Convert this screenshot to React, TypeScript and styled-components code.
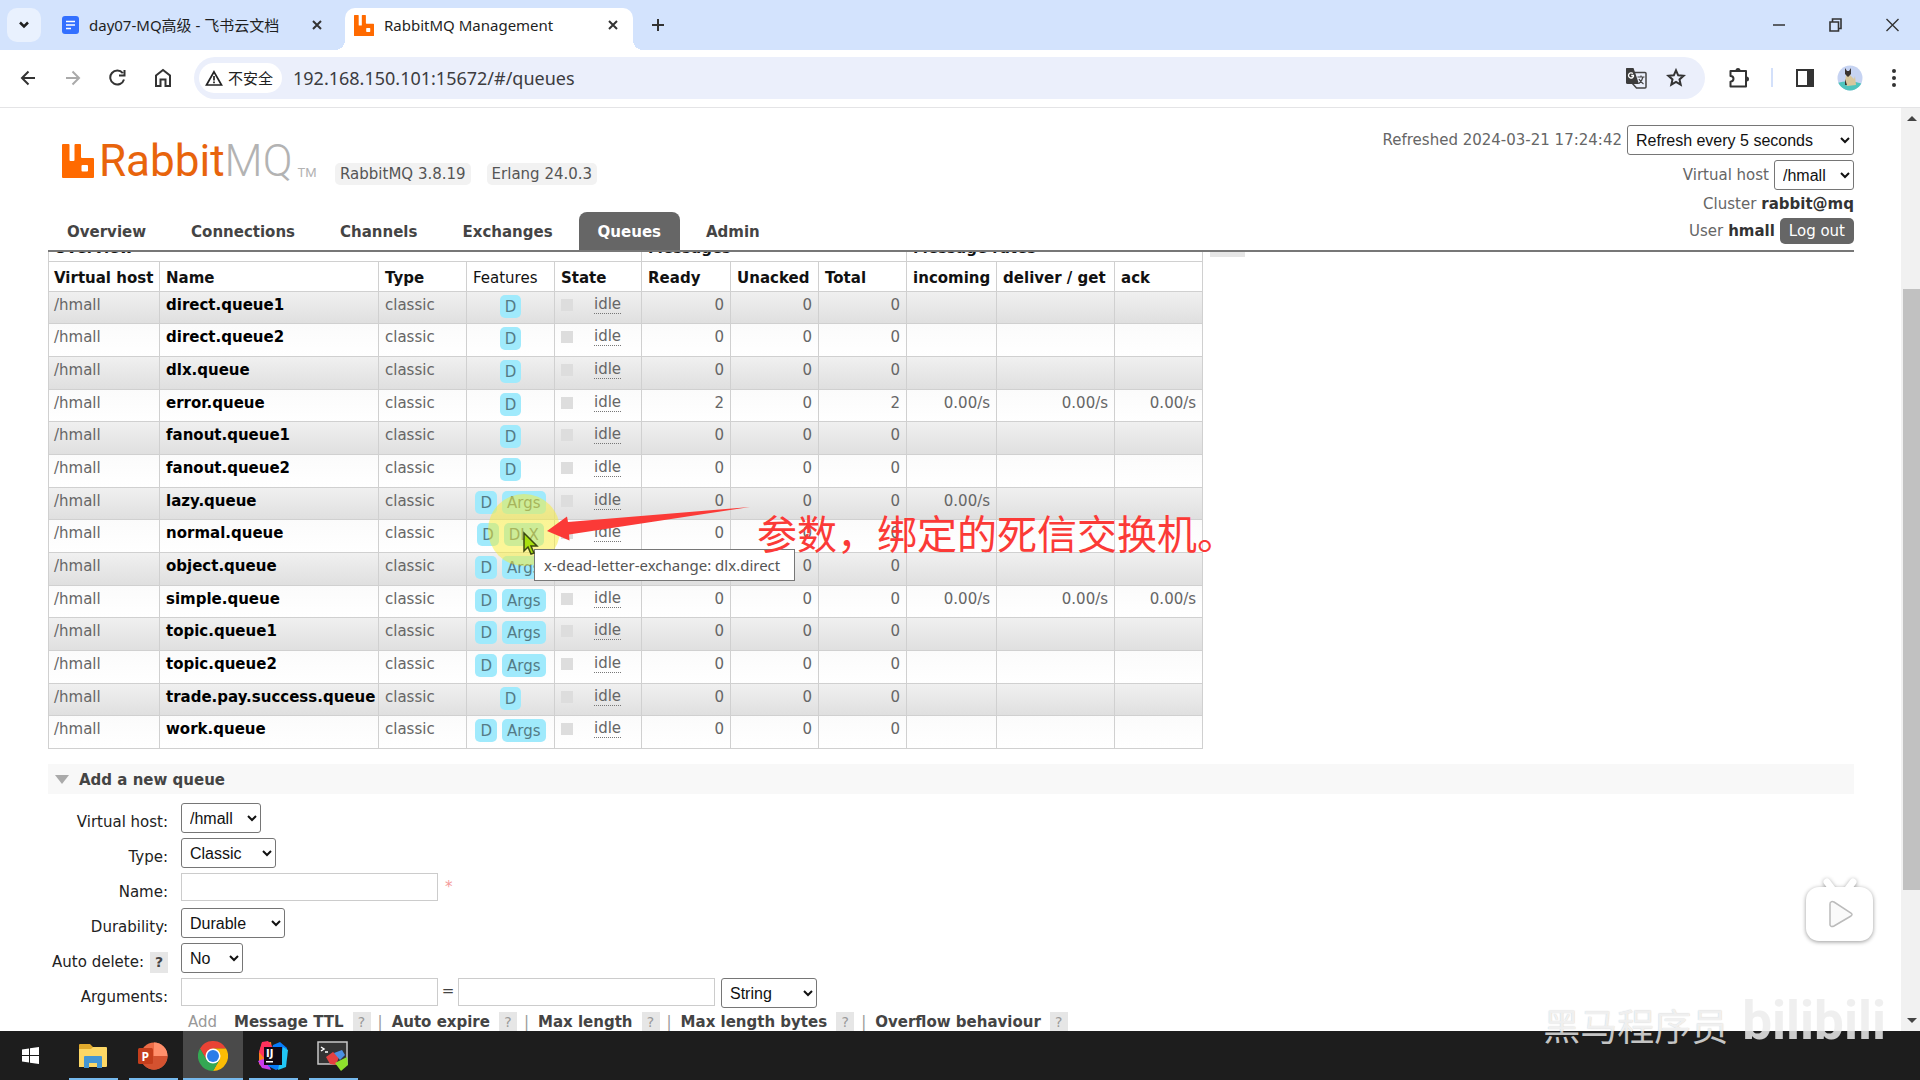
import React from "react";
import styled, { createGlobalStyle } from "styled-components";

const pageFont = `"DejaVu Sans", Verdana, "Noto Sans CJK SC", sans-serif`;
const uiFont = `"Noto Sans", "Noto Sans CJK SC", sans-serif`;
const selectFont = `"Liberation Sans", Arial, sans-serif`;

const GlobalStyle = createGlobalStyle`
  * { box-sizing: border-box; }
  body { margin: 0; background: #fff; font-family: ${pageFont}; font-size: 15px; line-height: 18px; color: #444; }
  button, input { font: inherit; color: inherit; }
  button { border: 0; padding: 0; background: none; cursor: pointer; }
  a { color: inherit; text-decoration: none; }
`;

const Screen = styled.div`
  position: relative;
  height: 100vh;
  display: flex;
  flex-direction: column;
  overflow: hidden;
`;

/* ---------- browser chrome ---------- */

const TabStrip = styled.div`
  flex: none;
  height: 50px;
  display: flex;
  align-items: stretch;
  padding: 8px 0 0 7px;
  background: #d3e3fd;
  font-family: ${uiFont};
  font-size: 15px;
  color: #1f1f1f;
`;

const TabSearch = styled.button`
  width: 34px;
  height: 34px;
  margin-right: 12px;
  border-radius: 10px;
  background: #e9f1fe;
  display: grid;
  place-items: center;
`;

const Tab = styled.div<{ $active?: boolean }>`
  position: relative;
  width: ${(p) => (p.$active ? 288 : 292)}px;
  display: flex;
  align-items: center;
  gap: 10px;
  padding: 0 ${(p) => (p.$active ? 14 : 22)}px 8px 9px;
  border-radius: 10px 10px 0 0;
  background: ${(p) => (p.$active ? "#fff" : "transparent")};
  span { flex: 1; white-space: nowrap; }
  &::before, &::after {
    content: "";
    display: ${(p) => (p.$active ? "block" : "none")};
    position: absolute;
    bottom: 0;
    width: 10px;
    height: 10px;
  }
  &::before { left: -10px; background: radial-gradient(circle at 0 0, transparent 10px, #fff 10px); }
  &::after { right: -10px; background: radial-gradient(circle at 100% 0, transparent 10px, #fff 10px); }
`;

const IconButton = styled.button<{ $w?: number }>`
  width: ${(p) => p.$w ?? 44}px;
  flex: none;
  display: grid;
  place-items: center;
  color: #333;
  &:disabled { color: #aaa; }
`;

const StripButton = styled(IconButton)`padding-bottom: 8px;`;
const Spring = styled.div`flex: 1;`;

const Toolbar = styled.div`
  flex: none;
  height: 58px;
  display: flex;
  align-items: center;
  padding: 0 4px 2px 5px;
  border-bottom: 1px solid #e4e4e6;
  background: #fff;
  font-family: ${uiFont};
`;

const AddressBar = styled.div`
  flex: 1;
  height: 42px;
  margin: 0 12px 0 9px;
  padding: 0 9px 0 5px;
  display: flex;
  align-items: center;
  border-radius: 21px;
  background: #ebeffb;
`;

const SafetyChip = styled.button`
  height: 30px;
  padding: 0 9px 0 6px;
  display: flex;
  align-items: center;
  gap: 5px;
  border-radius: 15px;
  background: #fff;
  font-size: 15px;
  color: #222;
`;

const Url = styled.input`
  flex: 1;
  min-width: 0;
  margin-left: 11px;
  padding: 0;
  border: 0;
  outline: 0;
  background: transparent;
  font-size: 18px;
  color: #3c3c40;
`;

const Divider = styled.i`width: 2px; height: 19px; margin: 0 10px; background: #d3e0fa;`;

/* ---------- page ---------- */

const Viewport = styled.div`flex: 1; min-height: 0; display: flex;`;
const Page = styled.div`flex: 1; min-width: 0; display: flex; flex-direction: column; background: #fff;`;

const Header = styled.header`
  flex: none;
  height: 144px;
  margin: 0 47px 0 48px;
  display: flex;
  justify-content: space-between;
  border-bottom: 2px solid #777;
`;

const HeaderLeft = styled.div`display: flex; flex-direction: column; justify-content: space-between; padding-top: 33px;`;
const LogoRow = styled.div`display: flex; align-items: flex-end; gap: 16px; padding-left: 14px;`;
const Logo = styled.a`
  display: flex;
  align-items: flex-end;
  width: 257px;
  height: 40px;
  font-family: Roboto, sans-serif;
  font-size: 44px;
  line-height: 40px;
  color: #e8640c;
  svg { margin: 0 5px 3px 0; flex: none; }
  b { font-weight: 300; color: #b3b3b3; }
  small { margin-left: 5px; font-size: 13px; line-height: 16px; color: #b3b3b3; }
`;
const Version = styled.span`
  padding: 2px 5px;
  margin-bottom: -4px;
  border-radius: 5px;
  background: #f2f2f2;
  color: #555;
`;

const Nav = styled.nav`display: flex; gap: 7px;`;
const NavLink = styled.a<{ $active?: boolean }>`
  height: 38px;
  padding: 11px 19px 0;
  border-radius: 8px 8px 0 0;
  font-weight: bold;
  color: ${(p) => (p.$active ? "#fff" : "#444")};
  background: ${(p) => (p.$active ? "#666" : "transparent")};
`;

const Status = styled.div`
  display: flex;
  flex-direction: column;
  align-items: flex-end;
  gap: 5px;
  padding-top: 17px;
  color: #666;
  b { color: #333; }
`;
const StatusLine = styled.div`display: flex; align-items: center; gap: 5px; white-space: nowrap;`;

const Select = styled.select<{ $w: number }>`
  width: ${(p) => p.$w}px;
  height: 30px;
  padding: 0 4px;
  border: 1px solid #767676;
  border-radius: 3px;
  background: #fff;
  font-family: ${selectFont};
  font-size: 16px;
  color: #111;
`;

const LogOut = styled.button`
  height: 26px;
  padding: 0 9px;
  border-radius: 5px;
  background: #666;
  color: #fff;
`;

const Content = styled.main`flex: 1; min-height: 0; overflow: hidden; padding: 0 47px 0 48px;`;
const TableRow = styled.div`display: flex; align-items: flex-start; gap: 7px; margin-top: -21px;`;

const QueueTable = styled.table`
  width: 1155px;
  table-layout: fixed;
  border-collapse: collapse;
  th, td { border: 1px solid #d0d0d0; padding: 0 6px; white-space: nowrap; }
  th { height: 30px; padding-top: 2px; text-align: left; color: #111; background: #fff; }
  td { height: 33px; padding-top: 4px; vertical-align: top; color: #666; }
  th:first-child, td:first-child { padding: 0 5px; }
  td:first-child { padding-top: 4px; }
  th:first-child { padding-top: 2px; }
  tbody tr:nth-child(3n + 1) td { height: 32px; }
  tbody tr:nth-child(odd) { background: linear-gradient(#f0f0f0, #dfdfdf); }
  tbody tr:nth-child(even) { background: linear-gradient(#fbfbfb, #fff); }
`;

const NameCell = styled.td`a { font-weight: bold; color: #000; }`;
const NumCell = styled.td`text-align: right;`;
const PlainTh = styled.th`font-weight: normal;`;
const Features = styled.div`display: flex; justify-content: center; gap: 5px;`;
const Badge = styled.abbr`
  height: 23px;
  padding: 3px 5px 2px;
  margin-top: -1px;
  border-radius: 5px;
  background: #a0eafc;
  color: #547b86;
  text-decoration: none;
`;
const State = styled.div`display: flex; align-items: center; gap: 21px;`;
const Square = styled.i`width: 12px; height: 12px; background: #ddd;`;
const Idle = styled.abbr`text-decoration: none; border-bottom: 1px dotted #777; line-height: 17px;`;

const ColumnsToggle = styled.button`height: 26px; width: 35px; padding-top: 4px; background: #e6e6e6; color: #666;`;

const SectionTitle = styled.h2`
  display: flex;
  align-items: center;
  gap: 10px;
  height: 30px;
  margin: 15px 0 9px;
  padding: 1px 7px 0;
  background: #f8f8f8;
  font-size: 15px;
  &::before {
    content: "";
    border: 7px solid transparent;
    border-top: 9px solid #aaa;
    border-bottom: 0;
  }
`;

const Form = styled.form`display: grid; grid-template-columns: 120px 1fr; column-gap: 13px; grid-auto-rows: 35px;`;
const LabelCell = styled.div`
  display: flex;
  justify-content: flex-end;
  align-items: center;
  gap: 6px;
  height: 38px;
  white-space: nowrap;
  color: #222;
`;
const Field = styled.div`
  display: flex;
  align-items: flex-start;
  gap: 6px;
  height: 30px;
`;
const TextInput = styled.input`width: 257px; height: 28px; border: 1px solid #ccc; background: #fff;`;
const Required = styled.span`color: #f49a9a; padding: 5px 1px;`;
const Equals = styled.span`width: 8px; display: flex; justify-content: center; line-height: 26px;`;
const Help = styled.button<{ $dark?: boolean }>`
  width: 18px;
  height: 21px;
  background: #e6e6e6;
  font-size: 14px;
  font-weight: ${(p) => (p.$dark ? "bold" : "normal")};
  color: ${(p) => (p.$dark ? "#444" : "#999")};
`;
const Presets = styled.div`
  display: flex;
  align-items: center;
  height: 24px;
  padding-left: 7px;
  margin-top: -3px;
  color: #999;
  white-space: nowrap;
`;
const Preset = styled.span`
  display: flex;
  align-items: center;
  gap: 9px;
  a { font-weight: bold; color: #444; }
  & + &::before { content: "|"; margin-left: 7px; }
`;
const AddWord = styled.span`width: 46px;`;

const ScrollTrack = styled.div`
  flex: none;
  width: 19px;
  display: flex;
  flex-direction: column;
  align-items: stretch;
  padding-left: 2px;
  background: #f1f1f1;
`;
const ScrollArrow = styled.button<{ $down?: boolean }>`
  height: 21px;
  display: grid;
  place-items: center;
  &::before {
    content: "";
    border: 5px solid transparent;
    border-${(p) => (p.$down ? "top" : "bottom")}-color: #444;
    border-${(p) => (p.$down ? "bottom" : "top")}: 0;
  }
`;
const Gap = styled.div<{ $grow: number }>`flex: ${(p) => p.$grow};`;
const Thumb = styled.div`flex: 601; background: #c1c1c1;`;

/* ---------- taskbar ---------- */

const Taskbar = styled.div`flex: none; height: 49px; display: flex; background: #1d1d1d;`;
const Task = styled.button<{ $open?: boolean; $active?: boolean }>`
  width: 60px;
  height: 49px;
  display: grid;
  place-items: center;
  background: ${(p) =>
    p.$open
      ? `linear-gradient(#76b9ed, #76b9ed) bottom / ${p.$active ? 60 : 49}px 2px no-repeat ${p.$active ? ", #4a4a4a" : ""}`
      : "none"};
  &:first-child { margin-right: 3px; }
`;

/* ---------- overlays ---------- */

const Spotlight = styled.div`
  position: absolute;
  left: 488px;
  top: 494px;
  width: 72px;
  height: 72px;
  border-radius: 50%;
  background: rgba(250, 238, 50, 0.5);
`;
const Tooltip = styled.div`
  position: absolute;
  left: 534px;
  top: 549px;
  height: 32px;
  padding: 5px 14px 0 9px;
  border: 1px solid #777;
  background: #fff;
  font-family: ${uiFont};
  font-size: 15px;
  line-height: 20px;
  color: #555;
`;
const Annotation = styled.p`
  position: absolute;
  left: 757px;
  top: 508px;
  margin: 0;
  font-family: "Noto Sans CJK SC", sans-serif;
  font-weight: 400;
  font-size: 40px;
  line-height: 48px;
  color: #fb3a37;
  white-space: nowrap;
`;
const Drawing = styled.svg<{ $x: number; $y: number }>`
  position: absolute;
  left: ${(p) => p.$x}px;
  top: ${(p) => p.$y}px;
  overflow: visible;
`;
const Watermark = styled.div`
  position: absolute;
  right: 34px;
  bottom: 29px;
  display: flex;
  align-items: flex-end;
  gap: 14px;
  font-family: "Noto Sans CJK SC", sans-serif;
  font-size: 37px;
  line-height: 52px;
  color: rgba(255, 255, 255, 0.75);
  text-shadow: 0 0 1px rgba(0, 0, 0, 0.25);
  white-space: nowrap;
  b { font-family: Roboto, sans-serif; font-size: 53px; line-height: 60px; color: rgba(236, 236, 236, 0.85); text-shadow: none; }
`;
const PlayBadge = styled.button`
  position: absolute;
  right: 46px;
  bottom: 138px;
  filter: drop-shadow(0 1px 2px rgba(0, 0, 0, 0.4));
  svg { display: block; }
`;

type Q = [string, string[], (string | number)[]];
const queues: Q[] = [
  ["direct.queue1", ["D"], [0, 0, 0, "", "", ""]],
  ["direct.queue2", ["D"], [0, 0, 0, "", "", ""]],
  ["dlx.queue", ["D"], [0, 0, 0, "", "", ""]],
  ["error.queue", ["D"], [2, 0, 2, "0.00/s", "0.00/s", "0.00/s"]],
  ["fanout.queue1", ["D"], [0, 0, 0, "", "", ""]],
  ["fanout.queue2", ["D"], [0, 0, 0, "", "", ""]],
  ["lazy.queue", ["D", "Args"], [0, 0, 0, "0.00/s", "", ""]],
  ["normal.queue", ["D", "DLX"], [0, 0, 0, "", "", ""]],
  ["object.queue", ["D", "Args"], [0, 0, 0, "", "", ""]],
  ["simple.queue", ["D", "Args"], [0, 0, 0, "0.00/s", "0.00/s", "0.00/s"]],
  ["topic.queue1", ["D", "Args"], [0, 0, 0, "", "", ""]],
  ["topic.queue2", ["D", "Args"], [0, 0, 0, "", "", ""]],
  ["trade.pay.success.queue", ["D"], [0, 0, 0, "", "", ""]],
  ["work.queue", ["D", "Args"], [0, 0, 0, "", "", ""]],
];
const colWidths = [111, 219, 88, 88, 87, 89, 88, 88, 90, 118, 88];
const presets = ["Message TTL", "Auto expire", "Max length", "Max length bytes", "Overflow behaviour"];

const line = { fill: "none", stroke: "currentColor", strokeWidth: 2 };

const Rabbit = ({ w, h }: { w: number; h: number }) => (
  <svg width={w} height={h} viewBox="0 0 32 34" preserveAspectRatio="none">
    <path
      fill="#ff6a00"
      fillRule="evenodd"
      d="M1 0h5.500q1 0 1 1v15q0 1 1 1h3q1 0 1-1V1q0-1 1-1h4.500q1 0 1 1v12q0 1 1 1H31q1 0 1 1v18q0 1-1 1H1q-1 0-1-1V1q0-1 1-1zM20.500 21q-1 0-1 1v4.500q0 1 1 1H25q1 0 1-1V22q0-1-1-1z"
    />
  </svg>
);

const Close = () => (
  <svg width="12" height="12" viewBox="0 0 12 12"><path {...line} d="M2 2l8 8M10 2l-8 8" /></svg>
);

export default function App() {
  return (
    <Screen>
      <GlobalStyle />
      <TabStrip>
        <TabSearch aria-label="Search tabs">
          <svg width="12" height="8" viewBox="0 0 12 8"><path {...line} strokeWidth="2.500" d="M2 1.500l4 4 4-4" /></svg>
        </TabSearch>
        <Tab>
          <svg width="17" height="18" viewBox="0 0 17 18">
            <rect width="17" height="18" rx="3" fill="#3370ff" />
            <path d="M4 5.500h9M4 9h9M4 12.500h5" stroke="#fff" strokeWidth="1.500" />
          </svg>
          <span>day07-MQ高级 - 飞书云文档</span>
          <IconButton $w={12} aria-label="Close tab"><Close /></IconButton>
        </Tab>
        <Tab $active>
          <Rabbit w={20} h={21} />
          <span>RabbitMQ Management</span>
          <IconButton $w={12} aria-label="Close tab"><Close /></IconButton>
        </Tab>
        <StripButton $w={49} aria-label="New tab">
          <svg width="14" height="14" viewBox="0 0 14 14"><path {...line} d="M7 1v12M1 7h12" /></svg>
        </StripButton>
        <Spring />
        <StripButton $w={57} aria-label="Minimize">
          <svg width="12" height="12" viewBox="0 0 12 12"><path {...line} strokeWidth="1.500" d="M0 6h12" /></svg>
        </StripButton>
        <StripButton $w={57} aria-label="Restore">
          <svg width="13" height="14" viewBox="0 0 13 14"><path {...line} strokeWidth="1.600" d="M1 4h8.500v9H1zM3.500 4V1H12v9.500H9.500" /></svg>
        </StripButton>
        <StripButton $w={56} aria-label="Close">
          <svg width="13" height="14" viewBox="0 0 13 14"><path {...line} strokeWidth="1.400" d="M.5 1l12 12M12.500 1l-12 12" /></svg>
        </StripButton>
      </TabStrip>

      <Toolbar>
        <IconButton $w={45} aria-label="Back">
          <svg width="16" height="16" viewBox="0 0 16 16"><path {...line} d="M15 8H2M8.500 1.500L2 8l6.500 6.500" /></svg>
        </IconButton>
        <IconButton $w={45} disabled aria-label="Forward">
          <svg width="16" height="16" viewBox="0 0 16 16"><path {...line} d="M1 8h13M7.500 1.500L14 8l-6.500 6.500" /></svg>
        </IconButton>
        <IconButton $w={45} aria-label="Reload">
          <svg width="17" height="17" viewBox="0 0 17 17"><path {...line} d="M15 10.500a7 7 0 1 1-1.200-6.300M15.500 1v5.500H10" /></svg>
        </IconButton>
        <IconButton $w={45} aria-label="Home">
          <svg width="18" height="19" viewBox="0 0 18 19"><path {...line} d="M2 7.500L9 2l7 5.500V18h-4.500v-6.500h-5V18H2z" /></svg>
        </IconButton>
        <AddressBar>
          <SafetyChip>
            <svg width="18" height="16" viewBox="0 0 18 16"><path {...line} strokeWidth="1.700" d="M9 1.800L16.500 15h-15zM9 6v4.500M9 11.500v1.800" /></svg>
            不安全
          </SafetyChip>
          <Url aria-label="Address" defaultValue="192.168.150.101:15672/#/queues" />
          <IconButton $w={40} aria-label="Translate">
            <svg width="22" height="22" viewBox="0 0 22 22">
              <path d="M8.500 5.500H20q1 0 1 1V20q0 1-1 1h-8.500L7 16" fill="#ebeffb" stroke="#444" strokeWidth="1.500" />
              <path d="M1.500 1h7L14 17H2.500Q1 17 1 15.500V2q0-1 .5-1z" fill="#3c3c3c" />
              <path d="M9 8.500H6.200M8.700 8.700a2.600 2.600 0 1 1-.8-2.200" fill="none" stroke="#fff" strokeWidth="1.300" />
              <path d="M12.500 10h7M16 8.500V10M18 10q-1 4-4 6.500M14 12q1.500 3 4.500 5" fill="none" stroke="#444" strokeWidth="1.200" />
            </svg>
          </IconButton>
          <IconButton $w={40} aria-label="Bookmark">
            <svg width="20" height="19" viewBox="0 0 20 19"><path {...line} strokeWidth="2" d="M10 2.300l2.200 5 5.400.5-4.100 3.600 1.200 5.300-4.700-2.800-4.700 2.800 1.200-5.300L2.400 7.800l5.400-.5z" /></svg>
          </IconButton>
        </AddressBar>
        <IconButton aria-label="Extensions">
          <svg width="22" height="22" viewBox="0 0 22 22">
            <path {...line} d="M2.500 4h15.500v15.500H2.500v-4.800q3-.2 3-2.900t-3-2.900z" strokeLinejoin="round" />
            <path fill="currentColor" d="M7.500 3.500a2.500 2.500 0 0 1 5 0zM18.500 9.500a2.500 2.500 0 0 1 0 5z" />
          </svg>
        </IconButton>
        <Divider />
        <IconButton aria-label="Side panel">
          <svg width="18" height="18" viewBox="0 0 18 18"><path {...line} d="M1 1h16v16H1z" /><path fill="currentColor" d="M11 1h6v16h-6z" /></svg>
        </IconButton>
        <IconButton $w={45} aria-label="Profile">
          <svg width="26" height="26" viewBox="0 0 26 26">
            <clipPath id="face"><circle cx="13" cy="13" r="12.500" /></clipPath>
            <g clipPath="url(#face)">
              <path fill="#c6d3f2" d="M0 0h26v26H0z" />
              <path fill="#4fc4bd" d="M0 18q13-4 26 1v7H0z" />
              <path fill="#d8c79d" d="M9 10h4l4 4 1-3 1 9-9 1-2-4z" />
              <path fill="#3a3330" d="M8 3l2 3h2l2-3v6l-3 3-3-3zM8 14l2 6H8z" />
            </g>
          </svg>
        </IconButton>
        <IconButton aria-label="Menu">
          <svg width="4" height="18" viewBox="0 0 4 18" fill="currentColor"><circle cx="2" cy="2" r="2" /><circle cx="2" cy="9" r="2" /><circle cx="2" cy="16" r="2" /></svg>
        </IconButton>
      </Toolbar>

      <Viewport>
        <Page>
          <Header>
            <HeaderLeft>
              <LogoRow>
                <Logo href="#/"><Rabbit w={32} h={34} />Rabbit<b>MQ</b><small>TM</small></Logo>
                <Version>RabbitMQ 3.8.19</Version>
                <Version>Erlang 24.0.3</Version>
              </LogoRow>
              <Nav>
                {["Overview", "Connections", "Channels", "Exchanges", "Queues", "Admin"].map((n) => (
                  <NavLink key={n} href={"#/" + n.toLowerCase()} $active={n === "Queues"}>{n}</NavLink>
                ))}
              </Nav>
            </HeaderLeft>
            <Status>
              <StatusLine>
                <label htmlFor="refresh">Refreshed 2024-03-21 17:24:42</label>
                <Select id="refresh" $w={227}><option>Refresh every 5 seconds</option></Select>
              </StatusLine>
              <StatusLine>
                <label htmlFor="vhost">Virtual host</label>
                <Select id="vhost" $w={80}><option>/hmall</option></Select>
              </StatusLine>
              <StatusLine>Cluster <b>rabbit@mq</b></StatusLine>
              <StatusLine>User <b>hmall</b> <LogOut>Log out</LogOut></StatusLine>
            </Status>
          </Header>

          <Content>
            <TableRow>
              <QueueTable>
                <colgroup>{colWidths.map((w, i) => <col key={i} width={w} />)}</colgroup>
                <thead>
                  <tr><th colSpan={5}>Overview</th><th colSpan={3}>Messages</th><th colSpan={3}>Message rates</th></tr>
                  <tr>
                    <th>Virtual host</th><th>Name</th><th>Type</th><PlainTh>Features</PlainTh><th>State</th>
                    <th>Ready</th><th>Unacked</th><th>Total</th><th>incoming</th><th>deliver / get</th><th>ack</th>
                  </tr>
                </thead>
                <tbody>
                  {queues.map(([name, features, nums]) => (
                    <tr key={name}>
                      <td>/hmall</td>
                      <NameCell><a href={"#/queues/" + name}>{name}</a></NameCell>
                      <td>classic</td>
                      <td><Features>{features.map((f) => <Badge key={f}>{f}</Badge>)}</Features></td>
                      <td><State><Square /><Idle>idle</Idle></State></td>
                      {nums.map((n, i) => <NumCell key={i}>{n}</NumCell>)}
                    </tr>
                  ))}
                </tbody>
              </QueueTable>
              <ColumnsToggle>+/-</ColumnsToggle>
            </TableRow>

            <SectionTitle>Add a new queue</SectionTitle>
            <Form>
              <LabelCell><label htmlFor="q-vhost">Virtual host:</label></LabelCell>
              <Field><Select id="q-vhost" $w={80}><option>/hmall</option></Select></Field>
              <LabelCell><label htmlFor="q-type">Type:</label></LabelCell>
              <Field><Select id="q-type" $w={95}><option>Classic</option></Select></Field>
              <LabelCell><label htmlFor="q-name">Name:</label></LabelCell>
              <Field><TextInput id="q-name" /><Required>*</Required></Field>
              <LabelCell><label htmlFor="q-dur">Durability:</label></LabelCell>
              <Field><Select id="q-dur" $w={104}><option>Durable</option></Select></Field>
              <LabelCell><label htmlFor="q-auto">Auto delete:</label><Help type="button" $dark>?</Help></LabelCell>
              <Field><Select id="q-auto" $w={62}><option>No</option></Select></Field>
              <LabelCell><label htmlFor="q-arg">Arguments:</label></LabelCell>
              <Field>
                <TextInput id="q-arg" /><Equals>=</Equals><TextInput aria-label="Argument value" />
                <Select aria-label="Argument type" $w={96}><option>String</option></Select>
              </Field>
              <span />
              <Presets>
                <AddWord>Add</AddWord>
                {presets.map((p) => <Preset key={p}><a href="#/queues">{p}</a><Help type="button">?</Help></Preset>)}
              </Presets>
            </Form>
          </Content>
        </Page>
        <ScrollTrack>
          <ScrollArrow aria-label="Scroll up" />
          <Gap $grow={160} /><Thumb /><Gap $grow={120} />
          <ScrollArrow $down aria-label="Scroll down" />
        </ScrollTrack>
      </Viewport>

      <Taskbar>
        <Task aria-label="Start">
          <svg width="17" height="17" viewBox="0 0 17 17" fill="#fff"><path d="M0 2.500l7-1v6.500H0zM8 1.300L17 0v8H8zM0 9h7v6.500l-7-1zM8 9h9v8l-9-1.300z" /></svg>
        </Task>
        <Task $open aria-label="File Explorer">
          <svg width="28" height="24" viewBox="0 0 28 24">
            <path fill="#e0a92c" d="M0 1q0-1 1-1h10l3 3h12v8H0z" />
            <path fill="#fcd765" d="M0 5h12l2-2h13q1 0 1 1v18q0 1-1 1H0z" />
            <path fill="#4596d3" d="M5 13q0-1 1-1h16q1 0 1 1v11h-5v-5h-8v5H5z" />
          </svg>
        </Task>
        <Task $open aria-label="PowerPoint">
          <svg width="30" height="28" viewBox="0 0 30 28">
            <circle cx="16" cy="14" r="13.500" fill="#ed6c47" />
            <path fill="#ff8f6b" d="M16 .5A13.500 13.500 0 0 1 29.500 14H16z" />
            <path fill="#d35230" d="M2.500 14h27A13.500 13.500 0 0 1 5 22z" />
            <rect x="0" y="6" width="15" height="16" rx="1.500" fill="#c43e1c" />
            <text x="3.500" y="18.500" fontFamily="Open Sans, sans-serif" fontWeight="700" fontSize="12" fill="#fff">P</text>
          </svg>
        </Task>
        <Task $open $active aria-label="Chrome">
          <svg width="30" height="30" viewBox="0 0 30 30">
            <path fill="#ea4335" d="M2 7.500L8.500 19 15 7.500h13A15 15 0 0 0 2 7.500z" />
            <path fill="#fbbc05" d="M28 7.500A15 15 0 0 1 15 30l6.500-11.200L15 7.500z" />
            <path fill="#34a853" d="M2 7.500A15 15 0 0 0 15 30l6.500-11.200-13 0z" />
            <circle cx="15" cy="15" r="7.500" fill="#fff" /><circle cx="15" cy="15" r="6" fill="#2b7de9" />
          </svg>
        </Task>
        <Task $open aria-label="IntelliJ IDEA">
          <svg width="30" height="30" viewBox="0 0 30 30">
            <path fill="#fc801d" d="M1 12L4 2l9-1 2 14-10 12-4-4z" />
            <path fill="#fe315d" d="M4 1l6-1 6 8-10 9-5-6z" />
            <path fill="#c83cf0" d="M0 20l8-3 5 12-9-2z" />
            <path fill="#087cfa" d="M15 4l7-3 7 6-2 18-9 4-8-4z" />
            <path fill="#21c6f5" d="M25 6l5 3-2 17-8 3z" />
            <rect x="6" y="6" width="18" height="18" fill="#100914" />
            <text x="8" y="16" fontFamily="DejaVu Sans, sans-serif" fontWeight="700" fontSize="10" fill="#fff">IJ</text>
            <path fill="#fff" d="M8 20h7v1.500H8z" />
          </svg>
        </Task>
        <Task $open aria-label="Terminal">
          <svg width="32" height="30" viewBox="0 0 32 30">
            <path fill="#333" stroke="#c8c8c8" strokeWidth="1.500" d="M1 1h29v22H1z" />
            <path {...line} stroke="#fff" strokeWidth="1.500" d="M4 6l3 2-3 2M8 11h3" />
            <path fill="#e34040" d="M9 16l7-5 6 5-3 8-6-1z" />
            <path fill="#4a90e2" d="M17 12l8-3 3 5-5 5z" />
            <path fill="#8de02c" d="M18 22l12-6 1 8-7 6z" />
          </svg>
        </Task>
      </Taskbar>

      <Spotlight />
      <Tooltip role="tooltip">x-dead-letter-exchange: dlx.direct</Tooltip>
      <Drawing $x={523} $y={532} width="15" height="24" viewBox="0 0 15 24">
        <path fill="#a8e010" stroke="#3c4a10" strokeWidth="1.500" d="M1 1v18l4-4 3 7 3-1-3-7h6z" />
      </Drawing>
      <Drawing $x={547} $y={506} width="204" height="35" viewBox="0 0 204 35">
        <path fill="#fb3a37" d="M0 25L20 10.500 21 16 203 1 22 28.500 22.500 34.500z" />
      </Drawing>
      <Annotation>参数，绑定的死信交换机。</Annotation>
      <PlayBadge aria-label="Play video">
        <svg width="68" height="65" viewBox="0 0 68 65">
          <path stroke="#fff" strokeWidth="7" strokeLinecap="round" d="M21 5l6 8M47 5l-6 8" />
          <rect x="0" y="10" width="67" height="54" rx="13" fill="#fff" />
          <path d="M25 25q1-1 3 0l17 11q2 1.500 0 3L28 49q-3 1.500-4-1V27q0-2 1-2z" fill="#fafafa" stroke="#bbb" strokeWidth="1.500" />
        </svg>
      </PlayBadge>
      <Watermark>黑马程序员<b>bilibili</b></Watermark>
    </Screen>
  );
}
